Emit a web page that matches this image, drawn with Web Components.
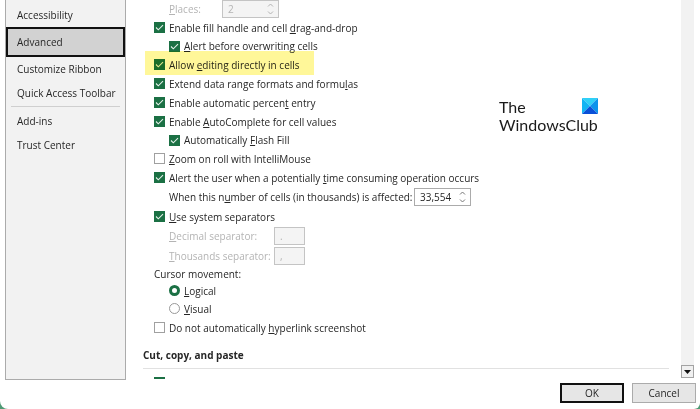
<!DOCTYPE html>
<html lang="en">
<head>
<meta charset="utf-8">
<title>Excel Options</title>
<style>
  body {
    margin: 0;
    background: #4f9a75;
    color: #262626;
    font: 10px/16px "Open Sans", "Noto Sans", sans-serif;
  }
</style>
</head>
<body>

<options-dialog>
  <options-nav slot="nav">
    <nav-item>Accessibility</nav-item>
    <nav-item selected>Advanced</nav-item>
    <nav-item>Customize Ribbon</nav-item>
    <nav-item>Quick Access Toolbar</nav-item>
    <nav-rule></nav-rule>
    <nav-item>Add-ins</nav-item>
    <nav-item>Trust Center</nav-item>
  </options-nav>

  <number-row value="2" size="places" disabled><u>P</u>laces:</number-row>
  <check-row checked>Enable fill handle and cell <u>d</u>rag-and-drop</check-row>
  <check-row checked sub><u>A</u>lert before overwriting cells</check-row>
  <check-row checked marked>Allow <u>e</u>diting directly in cells</check-row>
  <check-row checked>Extend data range formats and formu<u>l</u>as</check-row>
  <check-row checked>Enable automatic percen<u>t</u> entry</check-row>
  <check-row checked>Enable <u>A</u>utoComplete for cell values</check-row>
  <check-row checked sub>Automatically <u>F</u>lash Fill</check-row>
  <check-row><u>Z</u>oom on roll with IntelliMouse</check-row>
  <check-row checked>Alert the user when a potentially <u>t</u>ime consuming operation occurs</check-row>
  <number-row value="33,554" size="cells">When this n<u>u</u>mber of cells (in thousands) is affected:</number-row>
  <check-row checked><u>U</u>se system separators</check-row>
  <text-row value="."><u>D</u>ecimal separator:</text-row>
  <text-row value=","><u>T</u>housands separator:</text-row>
  <radio-set label="Cursor movement:" options="Logical,Visual"></radio-set>
  <check-row>Do not automatically <u>h</u>yperlink screenshot</check-row>
  <section-title>Cut, copy, and paste</section-title>
  <check-row checked></check-row>

  <club-logo slot="logo"></club-logo>
  <dialog-button slot="actions" primary>OK</dialog-button>
  <dialog-button slot="actions">Cancel</dialog-button>
</options-dialog>

<script>
class OptionsDialog extends HTMLElement {
  constructor() {
    super();
    this.attachShadow({ mode: 'open' }).innerHTML = `
      <style>
        :host {
          display: flex;
          flex-direction: column;
          height: 100vh;
          background: #fff;
          border-radius: 0 0 6px 8px;
          overflow: hidden;
        }
        .main { flex: 1; min-height: 0; display: flex; padding: 0 6px 0 5px; }
        .pane {
          flex: 1;
          position: relative;
          overflow: hidden;
          margin-bottom: 1px;
          padding: 0 12px 0 17px;
        }
        .logo { position: absolute; left: 373px; top: 98px; }
        .scroll {
          display: flex;
          flex-direction: column;
          justify-content: flex-end;
          width: 13px;
          margin-bottom: 2px;
          background: #f2f2f2;
        }
        .scroll button {
          display: grid;
          place-items: center;
          height: 13px;
          padding: 0;
          background: #f0f0f0;
          border: 1px solid #a3a3a3;
        }
        footer { display: flex; justify-content: flex-end; gap: 8px; padding: 3px 4px 6px; }
      </style>
      <div class="main">
        <slot name="nav"></slot>
        <div class="pane">
          <slot></slot>
          <div class="logo"><slot name="logo"></slot></div>
        </div>
        <div class="scroll">
          <button aria-label="Scroll down">
            <svg width="7" height="4" viewBox="0 0 7 4"><path d="M0 0h7L3.5 4z" fill="#111"/></svg>
          </button>
        </div>
      </div>
      <footer><slot name="actions"></slot></footer>
    `;
  }
}
customElements.define('options-dialog', OptionsDialog);

class OptionsNav extends HTMLElement {
  constructor() {
    super();
    this.attachShadow({ mode: 'open' }).innerHTML = `
      <style>
        :host {
          display: block;
          box-sizing: border-box;
          width: 121px;
          padding-top: 3px;
          background: #f2f2f2;
          border: 1px solid #ababab;
          border-top: 0;
        }
      </style>
      <slot></slot>
    `;
  }
}
customElements.define('options-nav', OptionsNav);

class NavItem extends HTMLElement {
  constructor() {
    super();
    this.attachShadow({ mode: 'open' }).innerHTML = `
      <style>
        :host { display: block; }
        a {
          display: block;
          box-sizing: border-box;
          height: 24px;
          padding-left: 11px;
          line-height: 24px;
          color: inherit;
          text-decoration: none;
        }
        :host([selected]) a {
          height: 30px;
          padding-left: 9px;
          line-height: 26px;
          background: #d2d2d2;
          border: 2px solid #111;
        }
      </style>
      <a href="#"><slot></slot></a>
    `;
  }
}
customElements.define('nav-item', NavItem);

class NavRule extends HTMLElement {
  constructor() {
    super();
    this.attachShadow({ mode: 'open' }).innerHTML = `
      <style>
        :host { display: block; margin: 1px 5px 2px; border-top: 1px solid #cfcfcf; }
      </style>
    `;
  }
}
customElements.define('nav-rule', NavRule);

class CheckRow extends HTMLElement {
  constructor() {
    super();
    this.attachShadow({ mode: 'open' }).innerHTML = `
      <style>
        :host { display: flex; height: 19px; padding-left: 11px; white-space: nowrap; }
        :host([sub]) { height: 18px; padding-left: 26px; }
        label { position: relative; display: flex; align-items: center; gap: 4px; }
        .box { display: grid; }
        .box > * { grid-area: 1 / 1; }
        input {
          appearance: none;
          box-sizing: border-box;
          width: 11px;
          height: 11px;
          margin: 0;
          background: #fff;
          border: 1px solid #a0a0a0;
        }
        input:checked { background: #1b7044; border-color: #1b7044; }
        svg { display: none; pointer-events: none; }
        input:checked + svg { display: block; }
        :host([marked]) label::after {
          content: "";
          position: absolute;
          inset: -4px -14px -1px -9px;
          background: #fff799;
          mix-blend-mode: multiply;
        }
      </style>
      <label>
        <span class="box">
          <input type="checkbox">
          <svg width="11" height="11" viewBox="0 0 11 11"><path d="M2 5.5l2.3 2.3L9 3.2" fill="none" stroke="#e4f0e9" stroke-width="1.1"/></svg>
        </span>
        <span><slot></slot></span>
      </label>
    `;
  }

  connectedCallback() {
    this.shadowRoot.querySelector('input').checked = this.hasAttribute('checked');
  }
}
customElements.define('check-row', CheckRow);

class NumberRow extends HTMLElement {
  constructor() {
    super();
    this.attachShadow({ mode: 'open' }).innerHTML = `
      <style>
        :host { display: flex; align-items: center; height: 20px; padding-left: 26px; }
        :host([size="places"]) { height: 18px; }
        :host([disabled]) { color: #b4b4b4; }
        label { width: 245px; white-space: nowrap; }
        :host([size="places"]) label { width: 53px; }
        .spin {
          display: flex;
          align-items: center;
          box-sizing: border-box;
          width: 57px;
          height: 18px;
          padding-right: 4px;
          background: #fff;
          border: 1px solid #ababab;
        }
        :host([disabled]) .spin { background: #f4f4f4; border-color: #c4c4c4; }
        input {
          flex: 1;
          min-width: 0;
          padding: 0 0 0 5px;
          border: 0;
          background: none;
          color: inherit;
          font: inherit;
        }
        svg { fill: none; stroke: #777; }
        :host([disabled]) svg { stroke: #b4b4b4; }
      </style>
      <label for="number"><slot></slot></label>
      <span class="spin">
        <input id="number" type="text">
        <svg width="7" height="12" viewBox="0 0 7 12"><path d="M1 3.5L3.5 1 6 3.5M1 8.5L3.5 11 6 8.5"/></svg>
      </span>
    `;
  }

  connectedCallback() {
    const input = this.shadowRoot.querySelector('input');
    input.value = this.getAttribute('value');
    input.disabled = this.hasAttribute('disabled');
  }
}
customElements.define('number-row', NumberRow);

class TextRow extends HTMLElement {
  constructor() {
    super();
    this.attachShadow({ mode: 'open' }).innerHTML = `
      <style>
        :host { display: flex; align-items: center; height: 20px; padding-left: 26px; color: #b4b4b4; }
        label { width: 105px; white-space: nowrap; }
        input {
          box-sizing: border-box;
          width: 31px;
          height: 18px;
          padding: 0 5px;
          background: #f4f4f4;
          border: 1px solid #c4c4c4;
          color: inherit;
          font: inherit;
        }
      </style>
      <label for="text"><slot></slot></label>
      <input id="text" type="text" disabled>
    `;
  }

  connectedCallback() {
    this.shadowRoot.querySelector('input').value = this.getAttribute('value');
  }
}
customElements.define('text-row', TextRow);

class RadioSet extends HTMLElement {
  connectedCallback() {
    const root = this.attachShadow({ mode: 'open' });
    let rows = '';
    this.getAttribute('options').split(',').forEach((option, index) => {
      rows += `
        <label>
          <input type="radio" name="choice" ${index === 0 ? 'checked' : ''}>
          <span><u>${option[0]}</u>${option.slice(1)}</span>
        </label>
      `;
    });
    root.innerHTML = `
      <style>
        :host { display: block; }
        fieldset { margin: 0; padding: 0 0 0 11px; border: 0; }
        legend { padding: 0; }
        label { display: flex; align-items: center; gap: 4px; height: 18px; padding-left: 15px; }
        input {
          appearance: none;
          box-sizing: border-box;
          width: 11px;
          height: 11px;
          margin: 0 0 2px;
          border: 1px solid #999;
          border-radius: 50%;
        }
        input:checked { border: 3px solid #1b7044; }
      </style>
      <fieldset>
        <legend>${this.getAttribute('label')}</legend>
        ${rows}
      </fieldset>
    `;
  }
}
customElements.define('radio-set', RadioSet);

class SectionTitle extends HTMLElement {
  constructor() {
    super();
    this.attachShadow({ mode: 'open' }).innerHTML = `
      <style>
        :host { display: block; margin: 10px 0 4px; padding-bottom: 5px; border-bottom: 1px solid #e1e1e1; }
        h2 { margin: 0; font: bold 10px/16px "Open Sans", "Noto Sans", sans-serif; }
      </style>
      <h2><slot></slot></h2>
    `;
  }
}
customElements.define('section-title', SectionTitle);

class ClubLogo extends HTMLElement {
  constructor() {
    super();
    this.attachShadow({ mode: 'open' }).innerHTML = `
      <style>
        :host { display: block; color: #1a1a1a; font: 16px/18px Lato, "Open Sans", sans-serif; }
        .top { display: flex; justify-content: space-between; }
      </style>
      <div class="top">
        <span>The</span>
        <svg width="16" height="16" viewBox="0 0 16 16">
          <path d="M0 0h16L8 8z" fill="#2fd0f7"/>
          <path d="M0 0l8 8-8 8z" fill="#12b4f3"/>
          <path d="M16 0v16L8 8z" fill="#0c93ec"/>
          <path d="M0 16l8-8 8 8z" fill="#0a50d8"/>
        </svg>
      </div>
      <div>WindowsClub</div>
    `;
  }
}
customElements.define('club-logo', ClubLogo);

class DialogButton extends HTMLElement {
  constructor() {
    super();
    this.attachShadow({ mode: 'open' }).innerHTML = `
      <style>
        :host { display: block; }
        button {
          box-sizing: border-box;
          width: 64px;
          height: 20px;
          padding: 0;
          background: #e6e6e6;
          border: 1px solid #ababab;
          color: inherit;
          font: inherit;
          line-height: 16px;
        }
        :host([primary]) button { border: 2px solid #111; }
      </style>
      <button><slot></slot></button>
    `;
  }
}
customElements.define('dialog-button', DialogButton);
</script>
</body>
</html>
